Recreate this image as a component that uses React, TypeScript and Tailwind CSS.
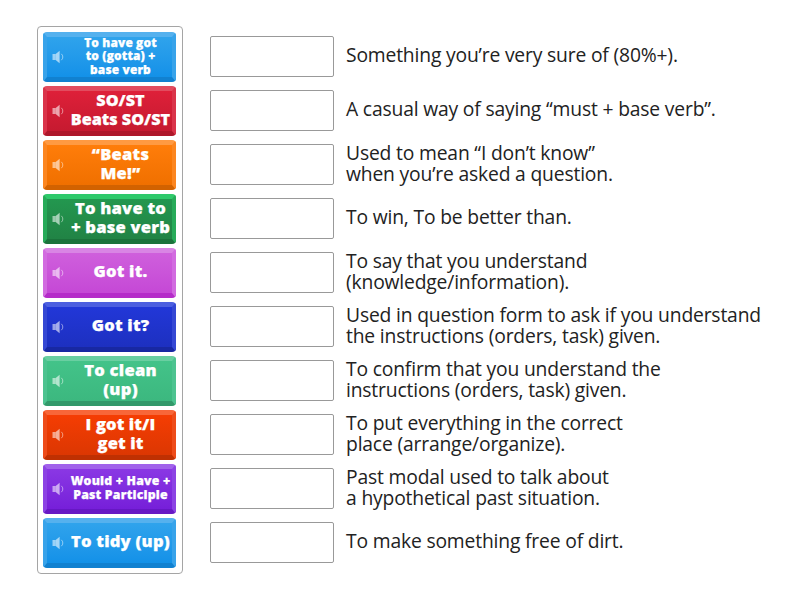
type Tile = {
  lines: string[]
  text: string
  face: string
  edge: string
}

const tiles: Tile[] = [
  { lines: ["To have got", "to (gotta) +", "base verb"], text: "mb-[2px] text-[11.9px] leading-[13.6px] tracking-[0.15px]", face: "from-[#2fa3ec] to-[#1391e8]", edge: "border-t-[#55b1ee] border-x-[#38a3ea] border-b-[#1181d0]" },
  { lines: ["SO/ST", "Beats SO/ST"], text: "mb-[3px] text-[16.2px] leading-[19px]", face: "from-[#de2039] to-[#c61a30]", edge: "border-t-[#e24c5f] border-x-[#da344a] border-b-[#ae172a]" },
  { lines: ["“Beats", "Me!”"], text: "mb-[5px] text-[16.5px] leading-[19px] tracking-[0.25px]", face: "from-[#ff7d0a] to-[#f07000]", edge: "border-t-[#ff9a42] border-x-[#fc8620] border-b-[#d26200]" },
  { lines: ["To have to", "+ base verb"], text: "mb-[5px] text-[16.6px] leading-[19px] tracking-[0.2px]", face: "from-[#23974f] to-[#218345]", edge: "border-t-[#2ec96a] border-x-[#27ab59] border-b-[#1b723b]" },
  { lines: ["Got it."], text: "mb-[5px] text-[16.6px] leading-[19px] tracking-[0.2px]", face: "from-[#cf5fdc] to-[#c548d6]", edge: "border-t-[#d985e4] border-x-[#d26be0] border-b-[#b52bc9]" },
  { lines: ["Got it?"], text: "mb-[5px] text-[16.6px] leading-[19px] tracking-[0.2px]", face: "from-[#2237d8] to-[#1d30c0]", edge: "border-t-[#4c5fe0] border-x-[#3548d4] border-b-[#1828a2]" },
  { lines: ["To clean", "(up)"], text: "mb-[5px] text-[16.6px] leading-[19px] tracking-[0.25px]", face: "from-[#43c389] to-[#3cb87f]", edge: "border-t-[#69cfa1] border-x-[#4dc390] border-b-[#32996a]" },
  { lines: ["I got it/I", "get it"], text: "mb-[5px] text-[16.6px] leading-[19px] tracking-[0.1px]", face: "from-[#f53d03] to-[#dc3702]", edge: "border-t-[#f86638] border-x-[#ee4c1a] border-b-[#bf3002]" },
  { lines: ["Would + Have +", "Past Participle"], text: "mb-[3px] text-[12.3px] leading-[14px] tracking-[0.2px]", face: "from-[#8a37e4] to-[#761fd9]", edge: "border-t-[#a162ea] border-x-[#8c43e4] border-b-[#6718c4]" },
  { lines: ["To tidy (up)"], text: "mb-[5px] text-[16.6px] leading-[19px] tracking-[0.2px]", face: "from-[#2fa3ec] to-[#1391e8]", edge: "border-t-[#55b1ee] border-x-[#38a3ea] border-b-[#1181d0]" },
]

const definitions: string[][] = [
  ["Something you’re very sure of (80%+)."],
  ["A casual way of saying “must + base verb”."],
  ["Used to mean “I don’t know”", "when you’re asked a question."],
  ["To win, To be better than."],
  ["To say that you understand", "(knowledge/information)."],
  ["Used in question form to ask if you understand", "the instructions (orders, task) given."],
  ["To confirm that you understand the", "instructions (orders, task) given."],
  ["To put everything in the correct", "place (arrange/organize)."],
  ["Past modal used to talk about", "a hypothetical past situation."],
  ["To make something free of dirt."],
]

function SpeakerIcon() {
  return (
    <svg className="h-3.5 w-3 shrink-0" viewBox="0 0 12 14" fill="none">
      <path d="M0.5 4h3.2v6H0.5z" fill="white" fillOpacity="0.55" />
      <path d="M3.7 4 7.6 0.8v12.4L3.7 10z" fill="white" fillOpacity="0.6" />
      <path d="M9.3 3.8c2 1.6 2 4.8 0 6.4" stroke="white" strokeOpacity="0.5" />
    </svg>
  )
}

function KeywordTile({ tile }: { tile: Tile }) {
  return (
    <button className={`flex h-[50px] w-[133px] items-center rounded-[4px] border-4 border-t-[5px] border-b-[5px] bg-linear-to-b pl-[5px] ${tile.face} ${tile.edge}`}>
      <SpeakerIcon />
      <span className={`-mr-[5px] flex-1 text-center font-extrabold whitespace-nowrap text-white [-webkit-text-stroke:0.25px_white] ${tile.text}`}>
        {tile.lines.map((line) => (
          <span key={line} className="block">{line}</span>
        ))}
      </span>
    </button>
  )
}

export default function App() {
  return (
    <main className="flex h-[600px] w-[800px] overflow-hidden bg-white pt-[26px] pl-[37px] font-['Open_Sans',sans-serif]">
      <section className="flex h-[548px] w-[146px] shrink-0 flex-col gap-1 rounded-[4px] border border-[#a5a5a5] px-[5px] pt-[5px]">
        {tiles.map((tile) => (
          <KeywordTile key={tile.lines[0]} tile={tile} />
        ))}
      </section>

      <section className="ml-[27px] flex flex-col pt-[3px]">
        {definitions.map((lines) => (
          <div key={lines[0]} className="flex h-[54px] items-center">
            <div className="mt-px h-[41px] w-[124px] shrink-0 rounded-[2px] border border-[#999]" />
            <p className="mb-[3px] ml-3 text-[19.3px] leading-[21px] tracking-[-0.17px] whitespace-nowrap text-[#222]">
              {lines.map((line) => (
                <span key={line} className="block">{line}</span>
              ))}
            </p>
          </div>
        ))}
      </section>
    </main>
  )
}
